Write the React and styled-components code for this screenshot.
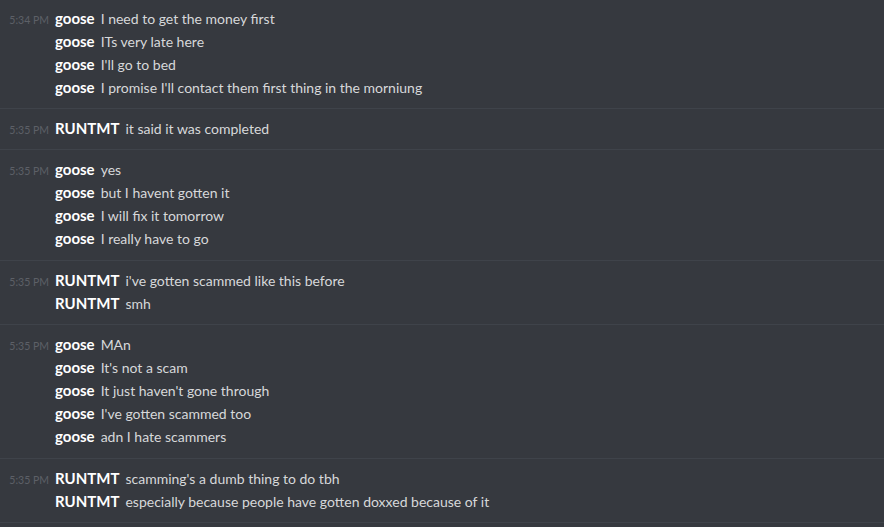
import styled, { createGlobalStyle } from "styled-components";

const GlobalStyle = createGlobalStyle`
  html, body {
    margin: 0;
    padding: 0;
    background: #36393f;
    overflow: hidden;
  }
`;

const groups = [
  {
    time: "5:34 PM",
    author: "goose",
    lines: [
      "I need to get the money first",
      "ITs very late here",
      "I'll go to bed",
      "I promise I'll contact them first thing in the morniung",
    ],
  },
  { time: "5:35 PM", author: "RUNTMT", lines: ["it said it was completed"] },
  {
    time: "5:35 PM",
    author: "goose",
    lines: ["yes", "but I havent gotten it", "I will fix it tomorrow", "I really have to go"],
  },
  {
    time: "5:35 PM",
    author: "RUNTMT",
    lines: ["i've gotten scammed like this before", "smh"],
  },
  {
    time: "5:35 PM",
    author: "goose",
    lines: [
      "MAn",
      "It's not a scam",
      "It just haven't gone through",
      "I've gotten scammed too",
      "adn I hate scammers",
    ],
  },
  {
    time: "5:35 PM",
    author: "RUNTMT",
    lines: [
      "scamming's a dumb thing to do tbh",
      "especially because people have gotten doxxed because of it",
    ],
  },
];

export default function App() {
  return (
    <>
      <GlobalStyle />
      <Chat>
        {groups.map((g, i) => (
          <Group key={i}>
            {g.lines.map((line, j) => (
              <Line key={j}>
                <Time>{j === 0 ? g.time : ""}</Time>
                <Author>{g.author}</Author>
                <Text>{line}</Text>
              </Line>
            ))}
          </Group>
        ))}
      </Chat>
    </>
  );
}

const Chat = styled.div`
  margin-top: -1.4px;
  width: 884px;
  height: 529px;
  overflow: hidden;
  font-family: Lato, "Open Sans", sans-serif;
`;

const Group = styled.div`
  padding: 8px 0 9.4px;
  border-bottom: 1px solid #3f434a;
`;

const Line = styled.div`
  display: flex;
  align-items: baseline;
  height: 23px;
  line-height: 23px;
  white-space: nowrap;
`;

const Time = styled.span`
  width: 49px;
  flex: none;
  text-align: right;
  font-size: 10.5px;
  color: #5d6067;
`;

const Author = styled.span`
  margin-left: 6px;
  font-size: 15px;
  font-weight: 700;
  color: #ffffff;
`;

const Text = styled.span`
  margin-left: 6px;
  font-size: 14px;
  color: #d7d8da;
`;
